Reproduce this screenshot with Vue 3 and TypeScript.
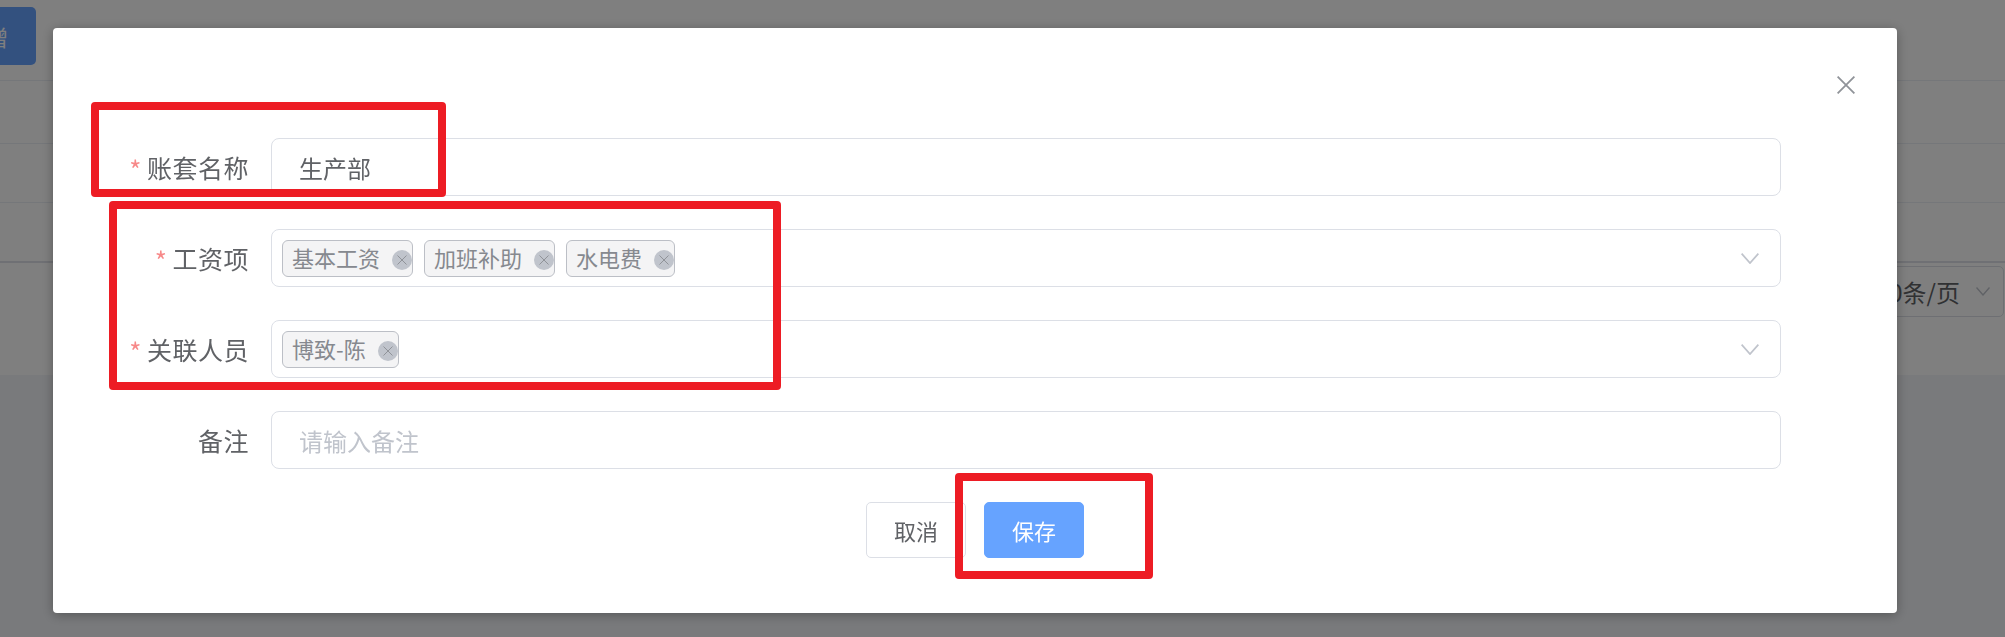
<script setup lang="ts">
import { ref } from 'vue'

interface Tag {
  id: number
  label: string
}

const name = ref('生产部')
const remark = ref('')
const items: Tag[] = [
  { id: 1, label: '基本工资' },
  { id: 2, label: '加班补助' },
  { id: 3, label: '水电费' },
]
const people: Tag[] = [{ id: 1, label: '博致-陈' }]
const rows = ['row-a', 'row-b', 'row-c']
</script>

<template>
  <div class="page">
    <div class="toolbar">
      <button class="add-btn">新增</button>
    </div>
    <div v-for="r in rows" :key="r" class="table-row" :class="r"></div>
    <div class="pager">
      <div class="page-size">
        <span>10条/页</span>
        <svg class="page-arrow" width="14" height="9" viewBox="0 0 14 9" fill="none" stroke="currentColor" stroke-width="1.4">
          <path d="M0.5 0.5L7 8L13.5 0.5" />
        </svg>
      </div>
    </div>
    <div class="foot"></div>
  </div>

  <div class="overlay">
    <div class="dialog">
      <div class="dialog-head">
        <svg class="close" width="18" height="18" viewBox="0 0 18 18" fill="none" stroke="currentColor" stroke-width="1.8">
          <path d="M0.6 0.6L17.4 17.4M17.4 0.6L0.6 17.4" />
        </svg>
      </div>

      <form class="form" @submit.prevent>
        <div class="form-row">
          <label class="form-label"><i class="star">*</i>账套名称</label>
          <input v-model="name" class="field" type="text" />
        </div>

        <div class="form-row">
          <label class="form-label"><i class="star">*</i>工资项</label>
          <div class="field select">
            <span v-for="t in items" :key="t.id" class="tag">
              <span class="tag-text">{{ t.label }}</span>
              <span class="tag-close">
                <svg width="10" height="10" viewBox="0 0 10 10" fill="none" stroke="currentColor" stroke-width="1">
                  <path d="M0.5 0.5L9.5 9.5M9.5 0.5L0.5 9.5" />
                </svg>
              </span>
            </span>
            <svg class="arrow" width="18" height="11" viewBox="0 0 18 11" fill="none" stroke="currentColor" stroke-width="1.8">
              <path d="M0.6 0.6L9 10L17.4 0.6" />
            </svg>
          </div>
        </div>

        <div class="form-row">
          <label class="form-label"><i class="star">*</i>关联人员</label>
          <div class="field select">
            <span v-for="t in people" :key="t.id" class="tag">
              <span class="tag-text">{{ t.label }}</span>
              <span class="tag-close">
                <svg width="10" height="10" viewBox="0 0 10 10" fill="none" stroke="currentColor" stroke-width="1">
                  <path d="M0.5 0.5L9.5 9.5M9.5 0.5L0.5 9.5" />
                </svg>
              </span>
            </span>
            <svg class="arrow" width="18" height="11" viewBox="0 0 18 11" fill="none" stroke="currentColor" stroke-width="1.8">
              <path d="M0.6 0.6L9 10L17.4 0.6" />
            </svg>
          </div>
        </div>

        <div class="form-row">
          <label class="form-label">备注</label>
          <input v-model="remark" class="field" type="text" placeholder="请输入备注" />
        </div>
      </form>

      <div class="dialog-foot">
        <button class="btn">取消</button>
        <button class="btn primary">保存</button>
      </div>

      <div class="mark mark-name"></div>
      <div class="mark mark-select"></div>
      <div class="mark mark-save"></div>
    </div>
  </div>
</template>

<style>
html,
body {
  margin: 0;
  overflow: hidden;
  background: #fff;
}
</style>

<style scoped>
.page {
  width: 2005px;
  height: 637px;
  overflow: hidden;
  display: flex;
  flex-direction: column;
  font-family: "Noto Sans CJK SC", "Noto Sans", sans-serif;
  background: #fff;
}

.toolbar {
  height: 81px;
  box-sizing: border-box;
  padding: 7px 0 0;
  border-bottom: 1px solid #ebeef5;
}

.add-btn {
  display: block;
  width: 100px;
  height: 58px;
  margin-left: -64px;
  border: none;
  border-radius: 5px;
  background: #66a3ff;
  color: #fff;
  font: inherit;
  font-size: 22px;
  padding: 0;
}

.table-row {
  box-sizing: border-box;
  border-bottom: 1px solid #ebeef5;
}

.row-a {
  height: 63px;
}

.row-b {
  height: 59px;
}

.row-c {
  height: 60px;
  border-bottom: 2px solid #dfe1e8;
}

.pager {
  height: 112px;
  box-sizing: border-box;
  display: flex;
  justify-content: flex-end;
  padding: 3px 1px 0 0;
}

.page-size {
  width: 180px;
  height: 51px;
  box-sizing: border-box;
  display: flex;
  align-items: center;
  justify-content: flex-end;
  gap: 16px;
  padding-right: 13px;
  border: 1px solid #dcdfe6;
  border-radius: 5px;
  color: #606266;
  font-size: 24px;
}

.page-arrow {
  color: #c0c4cc;
}

.foot {
  flex: 1;
  background: #f3f5f9;
}

.overlay {
  position: fixed;
  inset: 0;
  box-sizing: border-box;
  padding: 28px 0 0 53px;
  background: rgba(0, 0, 0, 0.5);
  font-family: "Noto Sans CJK SC", "Noto Sans", sans-serif;
}

.dialog {
  position: relative;
  width: 1844px;
  height: 585px;
  box-sizing: border-box;
  background: #fff;
  border-radius: 4px;
  box-shadow: 0 2px 12px rgba(0, 0, 0, 0.3);
}

.dialog-head {
  height: 110px;
  box-sizing: border-box;
  display: flex;
  justify-content: flex-end;
  padding: 48px 42px 0 0;
}

.close {
  color: #909399;
}

.form {
  display: flex;
  flex-direction: column;
  gap: 33px;
}

.form-row {
  display: flex;
  align-items: center;
  gap: 22px;
}

.form-label {
  width: 196px;
  text-align: right;
  box-sizing: border-box;
  color: #606266;
  font-size: 25px;
  line-height: 58px;
  letter-spacing: 0.5px;
}

.star {
  margin-right: 5px;
  color: #f78989;
  font-style: normal;
  font-size: 26px;
  line-height: 1;
  vertical-align: -2px;
}

.field {
  width: 1510px;
  height: 58px;
  box-sizing: border-box;
  padding: 0 27px;
  border: 1px solid #dcdfe6;
  border-radius: 8px;
  outline: none;
  background: #fff;
  color: #606266;
  font: inherit;
  font-size: 24px;
}

.field::placeholder {
  color: #c0c4cc;
}

.select {
  position: relative;
  display: flex;
  align-items: center;
  gap: 11px;
  padding: 0 10px;
}

.tag {
  display: inline-flex;
  align-items: center;
  gap: 12px;
  height: 37px;
  box-sizing: border-box;
  padding: 0 0 0 9px;
  border: 1px solid #bcbfc6;
  border-radius: 6px;
  background: #f4f4f5;
  color: #86898f;
  font-size: 22px;
}

.tag-text {
  margin-bottom: 2px;
}

.tag-close {
  width: 20px;
  height: 20px;
  margin-top: 3px;
  display: flex;
  align-items: center;
  justify-content: center;
  border-radius: 50%;
  background: #c0c4cc;
  color: #909399;
}

.arrow {
  position: absolute;
  top: 23px;
  right: 21px;
  color: #c0c4cc;
}

.dialog-foot {
  display: flex;
  justify-content: center;
  gap: 18px;
  margin-top: 33px;
}

.btn {
  width: 100px;
  height: 56px;
  padding: 0;
  box-sizing: border-box;
  border: 1px solid #dcdfe6;
  border-radius: 5px;
  background: #fff;
  color: #606266;
  font: inherit;
  font-size: 22px;
}

.primary {
  border-color: #66a3ff;
  background: #66a3ff;
  color: #fff;
}

.mark {
  position: absolute;
  box-sizing: border-box;
  border: 8px solid #ed1c24;
  border-radius: 4px;
}

.mark-name {
  left: 38px;
  top: 74px;
  width: 355px;
  height: 95px;
}

.mark-select {
  left: 56px;
  top: 173px;
  width: 672px;
  height: 189px;
}

.mark-save {
  left: 902px;
  top: 445px;
  width: 198px;
  height: 106px;
}
</style>
